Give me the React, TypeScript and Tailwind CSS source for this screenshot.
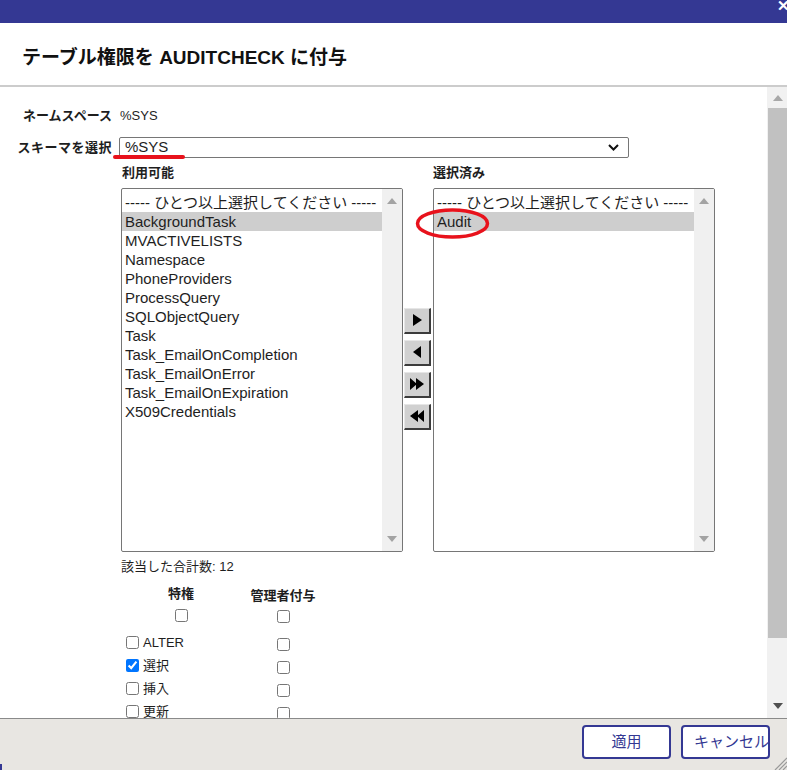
import React from "react";

const items = [
  "BackgroundTask",
  "MVACTIVELISTS",
  "Namespace",
  "PhoneProviders",
  "ProcessQuery",
  "SQLObjectQuery",
  "Task",
  "Task_EmailOnCompletion",
  "Task_EmailOnError",
  "Task_EmailOnExpiration",
  "X509Credentials",
];

const privs = [
  { name: "ALTER", checked: false },
  { name: "選択", checked: true },
  { name: "挿入", checked: false },
  { name: "更新", checked: false },
];

const font = "font-['Liberation_Sans','Noto_Sans_CJK_JP',sans-serif]";

function ListBox({ options }: { options: string[] }) {
  return (
    <div className="flex h-[364px] w-[282px] overflow-hidden rounded-[2px] border border-[#767676] bg-white">
      <div className="flex-1 pt-[4px] text-[15px] text-[#1e1e1e]">
        <div className="h-[19px] pl-[3px] leading-[19px] whitespace-nowrap">
          ----- ひとつ以上選択してください -----
        </div>
        {options.map((o, i) => (
          <div
            key={o}
            className={
              "h-[19px] pl-[3px] leading-[19px] whitespace-nowrap " +
              (i === 0 ? "bg-[#cecece]" : "")
            }
          >
            {o}
          </div>
        ))}
      </div>
      <div className="flex w-[20px] flex-col items-center justify-between bg-[#f0f0f0] py-[9px]">
        <svg width="10" height="6" viewBox="0 0 10 6">
          <path d="M5 0 L10 6 L0 6 Z" fill="#a3a3a3" />
        </svg>
        <svg width="10" height="6" viewBox="0 0 10 6">
          <path d="M0 0 L10 0 L5 6 Z" fill="#a3a3a3" />
        </svg>
      </div>
    </div>
  );
}

function MoveButton({ d }: { d: string }) {
  return (
    <div className="flex h-[26px] w-[27px] items-center justify-center border-t border-l border-[#e6e6e6] border-r-2 border-b-2 border-r-[#3c3c3c] border-b-[#3c3c3c] bg-[#d0d0d0]">
      <svg width="18" height="16" viewBox="0 0 18 16">
        <path d={d} fill="#000" />
      </svg>
    </div>
  );
}

export default function App() {
  return (
    <div className={"relative h-[770px] w-[787px] overflow-hidden bg-white " + font}>
      {/* title bar */}
      <div className="flex h-[23px] items-start justify-end bg-[#343893]">
        <span className="mr-[-3px] mt-[-2px] text-[15px] font-bold leading-[16px] text-white">✕</span>
      </div>

      <div className="flex h-[62px] items-center pl-[22px] pt-[8px]">
        <h1 className="text-[19px] font-bold text-[#111]">
          テーブル権限を AUDITCHECK に付与
        </h1>
      </div>
      <div className="h-[2px] bg-[#cccccc]" />

      {/* body */}
      <div className="flex h-[631px]">
        <div className="flex-1 overflow-hidden pt-[19px] text-[13px] text-[#1e1e1e]">
          <div className="grid grid-cols-[112px_1fr] gap-x-[7px]">
            <div className="h-[20px] text-right font-bold leading-[20px]">ネームスペース</div>
            <div className="h-[20px] pl-[1px] leading-[20px]">%SYS</div>
            <div className="mt-[11px] h-[21px] whitespace-nowrap text-right font-bold leading-[21px] tracking-[0.5px]">
              スキーマを選択
            </div>
            <div className="mt-[11px] flex h-[21px] w-[510px] items-center justify-between rounded-[2px] border border-[#767676] pl-[5px] pr-[9px] text-[15px]">
              <span>%SYS</span>
              <svg width="11" height="7" viewBox="0 0 11 7">
                <path d="M1 1 L5.5 5.5 L10 1" stroke="#111" strokeWidth="2" fill="none" />
              </svg>
            </div>
          </div>

          <div className="ml-[121px] mt-[7px] flex items-start">
            <div className="flex flex-col">
              <div className="h-[16px] pl-[1px] font-bold leading-[16px]">利用可能</div>
              <div className="mt-[7px]">
                <ListBox options={items} />
              </div>
            </div>
            <div className="flex h-[387px] w-[30px] flex-col justify-center gap-[6px] pl-[1px] pt-[20px]">
              <MoveButton d="M5 2 L14 8 L5 14 Z" />
              <MoveButton d="M13 2 L5 8 L13 14 Z" />
              <MoveButton d="M2 2 L9 8 L2 14 Z M8 2 L16 8 L8 14 Z" />
              <MoveButton d="M16 2 L9 8 L16 14 Z M10 2 L2 8 L10 14 Z" />
            </div>
            <div className="flex flex-col">
              <div className="h-[16px] font-bold leading-[16px]">選択済み</div>
              <div className="mt-[7px]">
                <ListBox options={["Audit"]} />
              </div>
            </div>
          </div>

          <div className="ml-[121px] mt-[7px] h-[16px] leading-[16px]">該当した合計数: 12</div>

          <div className="ml-[121px] mt-[10px] grid grid-cols-[120px_84px]">
            <div className="h-[18px] text-center font-bold leading-[18px]">特権</div>
            <div className="mt-[2px] h-[18px] text-center font-bold leading-[18px]">管理者付与</div>
            <div className="flex h-[26px] justify-center pt-[4px]">
              <input type="checkbox" readOnly className="h-[13px] w-[13px]" />
            </div>
            <div className="flex h-[26px] justify-center pt-[5px]">
              <input type="checkbox" readOnly className="h-[13px] w-[13px]" />
            </div>
            {privs.map((p) => (
              <React.Fragment key={p.name}>
                <div className="flex h-[23px] items-center gap-[4px] pl-[5px]">
                  <input type="checkbox" readOnly checked={p.checked} className="h-[13px] w-[13px]" />
                  <span>{p.name}</span>
                </div>
                <div className="flex h-[23px] items-center justify-center">
                  <input type="checkbox" readOnly className="mt-[3px] h-[13px] w-[13px]" />
                </div>
              </React.Fragment>
            ))}
          </div>
        </div>

        {/* page scrollbar */}
        <div className="flex w-[20px] flex-col bg-[#f1f1f1] pl-[1px]">
          <div className="flex h-[21px] items-center justify-center">
            <svg width="10" height="6" viewBox="0 0 10 6">
              <path d="M5 0 L10 6 L0 6 Z" fill="#a8a8a8" />
            </svg>
          </div>
          <div className="h-[530px] bg-[#c1c1c1]" />
          <div className="flex flex-1 items-end justify-center pb-[9px]">
            <svg width="10" height="6" viewBox="0 0 10 6">
              <path d="M0 0 L10 0 L5 6 Z" fill="#505050" />
            </svg>
          </div>
        </div>
      </div>

      {/* footer */}
      <div className="flex h-[52px] items-start justify-end gap-[10px] border-t border-[#8a8a8a] bg-[#e8e6e2] pt-[6px] pr-[17px]">
        <button className="h-[34px] w-[89px] rounded-[4px] border-2 border-[#343893] bg-white text-[15px] text-[#343893]">
          適用
        </button>
        <button className="h-[34px] w-[89px] overflow-hidden whitespace-nowrap rounded-[4px] border-2 border-[#343893] bg-white pl-[11px] text-left text-[15px] text-[#343893]">
          キャンセル
        </button>
      </div>

      {/* red annotations */}
      <div className="absolute left-[113px] top-[155px] h-[4px] w-[72px] rounded-full bg-[#e8121c]" />
      <svg className="absolute left-[414px] top-[207px]" width="78" height="33" viewBox="0 0 78 33">
        <ellipse cx="38.5" cy="16.5" rx="35" ry="13.5" fill="none" stroke="#e8121c" strokeWidth="3.5" />
      </svg>

      {/* resize grip */}
      <svg className="absolute left-[773px] top-[756px]" width="14" height="14" viewBox="0 0 14 14">
        <path d="M14 2 L2 14 M14 6 L6 14 M14 10 L10 14" stroke="#9a9a9a" strokeWidth="1.2" />
      </svg>
      <div className="absolute left-0 top-[764px] h-[6px] w-[2px] bg-[#343893]" />
    </div>
  );
}
